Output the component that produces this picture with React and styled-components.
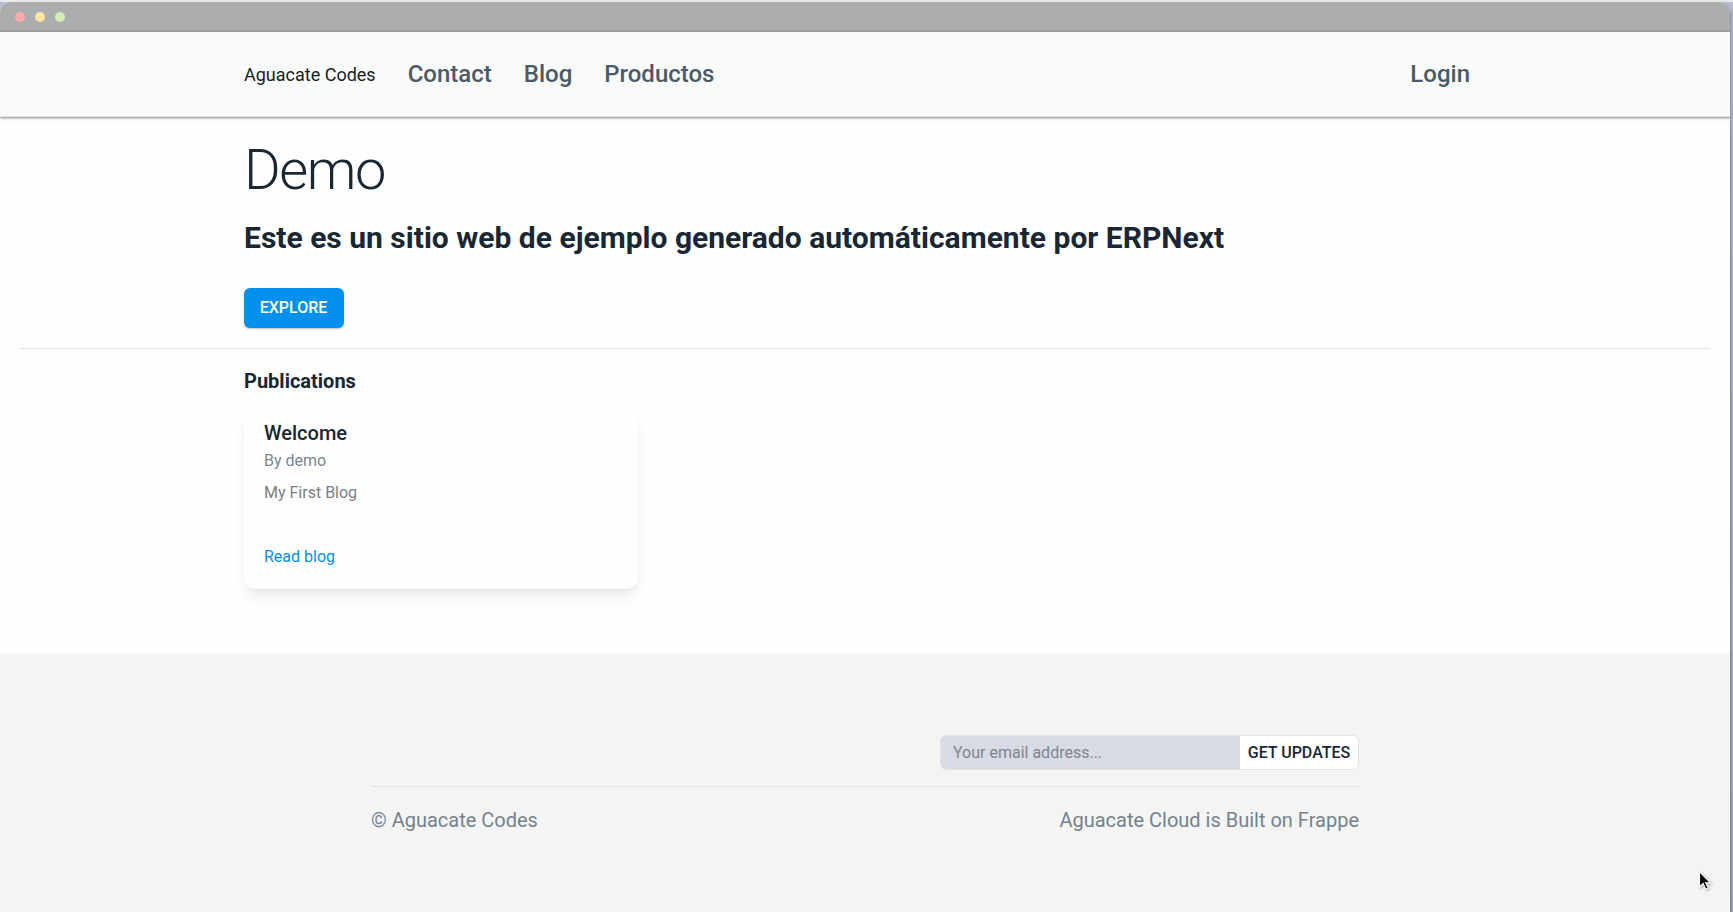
import React from "react";
import styled, { createGlobalStyle } from "styled-components";

const Global = createGlobalStyle`
  * { box-sizing: border-box; }
  body { margin: 0; font-family: Roboto, "Liberation Sans", sans-serif; font-size: 16px; line-height: 24px; color: #192734; overflow: hidden; }
  h1, h2, h3, p { margin: 0; }
  a { color: inherit; text-decoration: none; }
`;

const Desktop = styled.div`
  height: 912px;
  padding: 0 3px 0 0;
  background: linear-gradient(#b9bcd2, #a3a7b8);
  border-top: 2px solid #e6e8ea;
`;

const Window = styled.div`
  height: 910px;
  display: flex;
  flex-direction: column;
  background: #fefefe;
  border-radius: 10px 10px 0 0;
  overflow: hidden;
  box-shadow: 1px 2px 3px rgba(40, 45, 70, 0.4);
`;

const TitleBar = styled.div`
  flex: 0 0 30px;
  display: flex;
  align-items: center;
  gap: 10px;
  padding-left: 15px;
  background: linear-gradient(#abadae 0 27px, #a1a3a3);
`;

const Light = styled.span`
  width: 10px;
  height: 10px;
  border-radius: 50%;
  background: ${(p) => p.$color};
`;

const NavBar = styled.nav`
  flex: 0 0 85px;
  background: #f9fbfa;
  border-bottom: 1px solid #e2e6e9;
  box-shadow: 0 1px 3px rgba(0, 0, 0, 0.4), 0 1px 1px rgba(0, 0, 0, 0.1);
`;

const NavInner = styled.div`
  width: 1242px;
  height: 100%;
  margin: 0 auto;
  display: flex;
  align-items: center;
`;

const Brand = styled.a`
  font-size: 18px;
  color: #1b2024;
  padding-top: 2px;
  margin-right: 32px;
`;

const NavLink = styled.a`
  font-size: 24px;
  font-weight: 500;
  color: #4c5a67;
  margin-right: ${(p) => (p.$last ? "16px" : "32px")};
  margin-left: ${(p) => (p.$last ? "auto" : "0")};
`;

const Section = styled.section`
  width: 1242px;
  margin: 0 auto;
`;

const Hero = styled(Section)`
  flex: 0 0 231px;
  display: flex;
  flex-direction: column;
  align-items: flex-start;
  padding-top: 20px;
`;

const Title = styled.h1`
  font-size: 56px;
  line-height: 67px;
  font-weight: 300;
  letter-spacing: -1.4px;
`;

const Subtitle = styled.h2`
  margin-top: 15px;
  font-size: 30px;
  line-height: 38px;
  font-weight: 700;
  letter-spacing: 0.01px;
  white-space: nowrap;
`;

const PrimaryButton = styled.button`
  width: 100px;
  height: 40px;
  margin-top: 31px;
  padding: 0 1px 1px 0;
  border: 0;
  border-radius: 6px;
  background: #0291ec;
  color: #fff;
  font: 500 16px/24px Roboto, sans-serif;
  box-shadow: 0 1px 2px rgba(0, 0, 0, 0.25);
`;

const Rule = styled.div`
  flex: none;
  height: 1px;
  margin: ${(p) => p.$margin || "0"};
  background: #e2e3e4;
`;

const Publications = styled(Section)`
  flex: 0 0 304px;
  padding-top: 18px;
`;

const SectionTitle = styled.h3`
  font-size: 20px;
  line-height: 28px;
  font-weight: 700;
`;

const Card = styled.article`
  width: 394px;
  height: 182px;
  margin-top: 12px;
  padding: 13px 20px 0;
  border-radius: 12px;
  background: #fefefe;
  box-shadow: 0 10px 15px -3px rgba(0, 0, 0, 0.07), 0 4px 6px -2px rgba(0, 0, 0, 0.05);
`;

const CardTitle = styled.h3`
  font-size: 20px;
  line-height: 26px;
  font-weight: 500;
`;

const CardText = styled.p`
  margin-top: ${(p) => p.$gap}px;
  color: ${(p) => p.$color};
`;

const Footer = styled.footer`
  flex: 1;
  background: #f4f4f4;
  border-top: 1px solid #f7f7f7;
`;

const FooterInner = styled.div`
  width: 988px;
  margin: 0 auto;
  padding-top: 81px;
`;

const Signup = styled.form`
  width: 419px;
  height: 35px;
  margin-left: auto;
  display: flex;
  border: 1px solid #e1e3e7;
  border-radius: 6px;
  overflow: hidden;
`;

const EmailField = styled.input`
  width: 299px;
  padding: 0 0 0 12px;
  border: 0;
  background: #d8dbe4;
  font: 400 16px/24px Roboto, sans-serif;
  &::placeholder { color: #7b8690; opacity: 1; }
`;

const SubmitButton = styled.button`
  flex: 1;
  padding: 0;
  border: 0;
  background: #fff;
  color: #192734;
  font: 500 16px/24px Roboto, sans-serif;
  white-space: nowrap;
`;

const FooterLine = styled.div`
  display: flex;
  justify-content: space-between;
  margin-top: 18px;
  font-size: 20px;
  line-height: 30px;
  color: #74828c;
`;

const Cursor = styled.svg`
  position: absolute;
  left: 1698px;
  top: 870px;
  filter: drop-shadow(1px 1px 1px rgba(0, 0, 0, 0.3));
`;

const lights = ["#ffa9a8", "#ffe5a3", "#d3edb5"];
const links = ["Contact", "Blog", "Productos"];

export default function App() {
  return (
    <Desktop>
      <Global />
      <Window>
        <TitleBar>
          {lights.map((c) => <Light key={c} $color={c} />)}
        </TitleBar>
        <NavBar>
          <NavInner>
            <Brand>Aguacate Codes</Brand>
            {links.map((l) => <NavLink key={l}>{l}</NavLink>)}
            <NavLink $last>Login</NavLink>
          </NavInner>
        </NavBar>
        <Hero>
          <Title>Demo</Title>
          <Subtitle>Este es un sitio web de ejemplo generado automáticamente por ERPNext</Subtitle>
          <PrimaryButton>EXPLORE</PrimaryButton>
        </Hero>
        <Rule $margin="0 20px" />
        <Publications>
          <SectionTitle>Publications</SectionTitle>
          <Card>
            <CardTitle>Welcome</CardTitle>
            <CardText $gap={3} $color="#7b868f">By demo</CardText>
            <CardText $gap={8} $color="#7c7f83">My First Blog</CardText>
            <CardText $gap={40} $color="#0291ec">Read blog</CardText>
          </Card>
        </Publications>
        <Footer>
          <FooterInner>
            <Signup>
              <EmailField placeholder="Your email address..." />
              <SubmitButton type="button">GET UPDATES</SubmitButton>
            </Signup>
            <Rule $margin="16px 0 0" />
            <FooterLine>
              <span>© Aguacate Codes</span>
              <span>Aguacate Cloud is Built on Frappe</span>
            </FooterLine>
          </FooterInner>
        </Footer>
      </Window>
      <Cursor width="16" height="22" viewBox="0 0 16 22">
        <path d="M1.5 1.5V17l3.6-3.4 2.6 5.6 2.5-1.2-2.5-5.2H12.5z" fill="#000" stroke="#fff" strokeWidth="1.2" />
      </Cursor>
    </Desktop>
  );
}
